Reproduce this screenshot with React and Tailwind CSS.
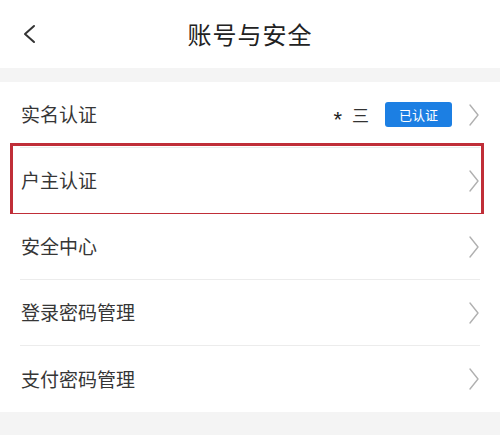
import React from "react";

const Chevron = () => (
  <svg width="12" height="24" viewBox="0 0 12 24" fill="none" className="shrink-0">
    <path d="M2 2 L10 12 L2 22" stroke="#b0b0b0" strokeWidth="1.4" strokeLinecap="round" strokeLinejoin="round" />
  </svg>
);

const Row = ({ label, right, last, highlight }) => (
  <div className="relative h-[66px] bg-white">
    <div className={`mx-[20px] h-full flex items-center justify-between ${last ? "" : "border-b border-[#ececec]"}`}>
      <span className="pl-px text-[19px] text-[#363636]">{label}</span>
      <div className="flex items-center">
        {right}
        <Chevron />
      </div>
    </div>
    {highlight && (
      <div className="absolute left-[10px] right-[16px] -top-[5px] -bottom-[2px] border-[3px] border-[#c02e38]" />
    )}
  </div>
);

export default function App() {
  return (
    <div
      className="w-[500px] h-[435px] bg-[#f4f4f4] flex flex-col overflow-hidden"
      style={{ fontFamily: '"Noto Sans CJK SC", "Noto Sans", sans-serif' }}
    >
      <div className="h-[68px] bg-white grid grid-cols-[1fr_auto_1fr] items-center">
        <div className="pl-[22px] flex items-center">
          <svg width="14" height="20" viewBox="0 0 14 20" fill="none">
            <path d="M12 2 L3 10 L12 18" stroke="#333333" strokeWidth="2" strokeLinecap="round" strokeLinejoin="round" />
          </svg>
        </div>
        <div className="text-[24px] text-[#222222] tracking-[1px]">账号与安全</div>
        <div />
      </div>
      <div className="h-[14px] bg-[#f4f4f4]" />
      <div className="flex flex-col bg-white">
        <Row
          label="实名认证"
          right={
            <div className="flex items-center mr-[16px]">
              <span
                className="text-[22px] leading-none text-[#222222] translate-y-[5px] mr-[10px]"
                style={{ fontFamily: '"Liberation Sans", sans-serif' }}
              >
                *
              </span>
              <span className="text-[17px] text-[#333333] mr-[16px]">三</span>
              <span className="h-[25px] w-[67px] rounded-[3px] bg-[#1c7fe3] text-white text-[13px] flex items-center justify-center">
                已认证
              </span>
            </div>
          }
        />
        <Row label="户主认证" highlight />
        <Row label="安全中心" />
        <Row label="登录密码管理" />
        <Row label="支付密码管理" last />
      </div>
      <div className="flex-1 bg-[#f4f4f4]" />
    </div>
  );
}
